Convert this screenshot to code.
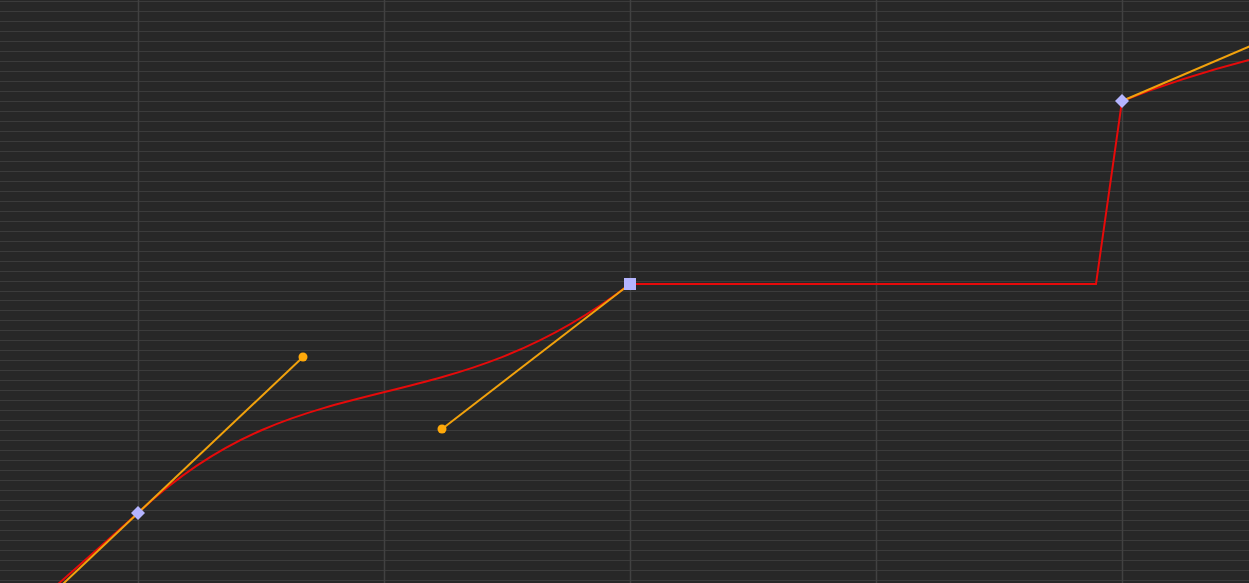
import React from 'react';

const W = 1249;
const H = 583;

// horizontal grid rows, slightly under 10px apart
const ROWS = Array.from({ length: 59 }, (_, i) => Math.round(1 + i * 9.983) + 0.5);
const COLS = [138, 384, 630, 876, 1122];

const KEY = '#b4b4ff';
const HANDLE = '#f2a20c';
const CURVE = '#e60a0a';

function Diamond({ x, y, r = 7 }) {
  return <polygon points={`${x},${y - r} ${x + r},${y} ${x},${y + r} ${x - r},${y}`} fill={KEY} />;
}

export default function App() {
  return (
    <div className="w-[1249px] h-[583px] bg-[#272727] overflow-hidden">
      <svg width={W} height={H} viewBox={`0 0 ${W} ${H}`} className="block">
        {ROWS.map((y) => (
          <line key={`r${y}`} x1="0" x2={W} y1={y} y2={y} stroke="#3b3b3b" strokeWidth="1.2" />
        ))}
        {COLS.map((x) => (
          <line key={`c${x}`} x1={x + 0.5} x2={x + 0.5} y1="0" y2={H} stroke="#414141" strokeWidth="1.5" />
        ))}

        {/* curve */}
        <path
          d="M40 600 Q90 556 138 513 C303 357 442 429 630 284 L1096 284 L1122 101 Q1180 78 1249 60"
          fill="none"
          stroke={CURVE}
          strokeWidth="2"
          strokeLinejoin="miter"
        />

        {/* handles */}
        <line x1="-27" y1="669" x2="303" y2="357" stroke={HANDLE} strokeWidth="2" />
        <line x1="442" y1="429" x2="630" y2="284" stroke={HANDLE} strokeWidth="2" />
        <line x1="1122" y1="101" x2="1260" y2="42" stroke={HANDLE} strokeWidth="2" />
        <circle cx="303" cy="357" r="4.5" fill="#ffa90a" />
        <circle cx="442" cy="429" r="4.5" fill="#ffa90a" />

        {/* keyframes */}
        <Diamond x={138} y={513} />
        <rect x="624" y="278" width="12" height="12" fill={KEY} />
        <Diamond x={1122} y={101} />
      </svg>
    </div>
  );
}
